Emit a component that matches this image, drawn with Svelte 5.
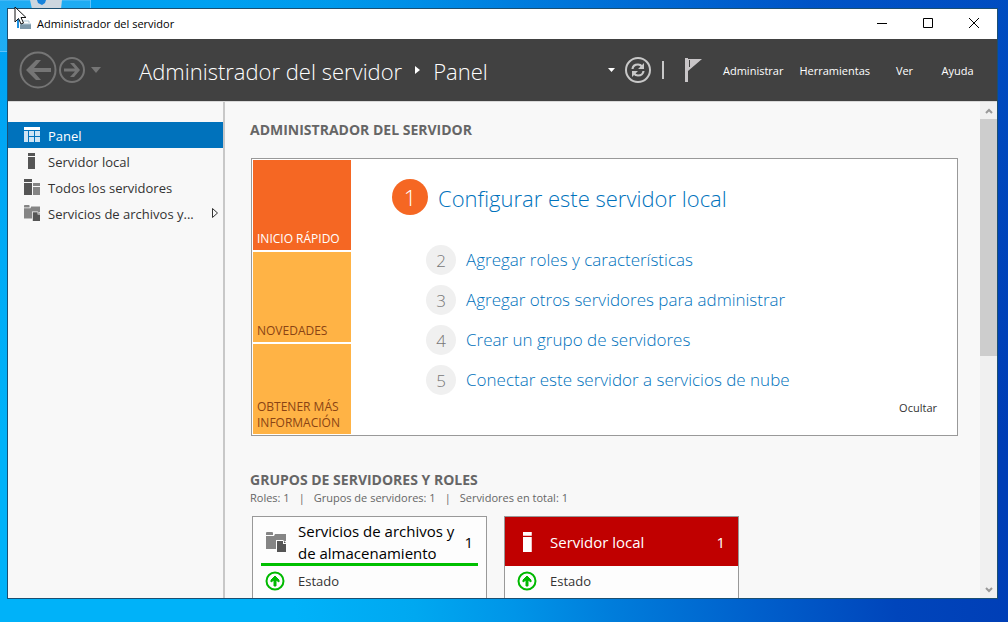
<script>
  const nav = [
    { label: 'Panel', icon: 'panel', active: true },
    { label: 'Servidor local', icon: 'server' },
    { label: 'Todos los servidores', icon: 'servers' },
    { label: 'Servicios de archivos y...', icon: 'files', expandable: true },
  ];
  const menus = ['Administrar', 'Herramientas', 'Ver', 'Ayuda'];
  const steps = [
    'Configurar este servidor local',
    'Agregar roles y características',
    'Agregar otros servidores para administrar',
    'Crear un grupo de servidores',
    'Conectar este servidor a servicios de nube',
  ];
  const totals = ['Roles: 1', 'Grupos de servidores: 1', 'Servidores en total: 1'];
  const groups = [
    { name: 'Servicios de archivos y de almacenamiento', icon: 'files', count: 1, alert: false },
    { name: 'Servidor local', icon: 'server', count: 1, alert: true },
  ];
</script>

{#snippet icon(name)}
  {#if name === 'panel'}
    <svg viewBox="0 0 16 16" aria-hidden="true">
      <path fill="#fff" d="M0 0h16v3H0z" />
      <path fill="#cfe4f4" d="M0 4h4v11H0zM5 4h5v5H5zM11 4h5v5h-5zM5 10h5v5H5zM11 10h5v5h-5z" />
    </svg>
  {:else if name === 'server'}
    <svg viewBox="0 0 16 16" aria-hidden="true">
      <path fill="currentColor" d="M4 0h7v3H4zM4 4h7v12H4z" />
    </svg>
  {:else if name === 'servers'}
    <svg viewBox="0 0 16 16" aria-hidden="true">
      <path fill="#555" d="M0 0h8v3H0zM0 4h8v12H0z" />
      <path fill="#858585" d="M9 4h7v3H9zM9 8h7v8H9z" />
    </svg>
  {:else}
    <svg viewBox="0 0 20 20" aria-hidden="true">
      <path fill="#858585" d="M0 1q0-1 1-1h5q1 0 1 1v2H0zM0 4h8l1-2h11v7h-2l-1-1h-7v9H0z" />
      <path fill="#555" d="M11 9h6v3h3v8h-9zM18 9l2 2h-2z" />
    </svg>
  {/if}
{/snippet}

<div class="desktop">
  <svg class="bin" viewBox="0 0 91 52" aria-hidden="true">
    <path d="M0 0h90.500v51.500H0" fill="#fff" fill-opacity=".12" stroke="#8fd3ff" stroke-opacity=".6" />
    <path d="M30 0h32l-1 9H32z" fill="#ccd6df" />
    <path d="M37 0h9l-1 3-3 2-4-2z" fill="#1683dc" />
  </svg>

  <div class="window">
    <div class="titlebar">
      <svg class="app" viewBox="0 0 16 14" aria-hidden="true">
        <path d="M1 2h2v10H1z" fill="#1a8fe0" />
        <path d="M4 8h11v5H4z" fill="#7c98aa" />
        <path d="M6 7V5h7v2M4 8h11" fill="none" stroke="#a9c3d2" />
      </svg>
      <span class="name">Administrador del servidor</span>
      <button aria-label="Minimizar"><svg viewBox="0 0 12 12"><path d="M1 6.500h10" /></svg></button>
      <button aria-label="Maximizar"><svg viewBox="0 0 12 12"><path d="M1.500 1.500h9v9h-9z" /></svg></button>
      <button aria-label="Cerrar"><svg viewBox="0 0 12 12"><path d="M1 1l10 10M11 1L1 11" /></svg></button>
    </div>

    <header>
      <button class="back" aria-label="Atrás">
        <svg viewBox="0 0 38 38">
          <circle cx="19" cy="19" r="17.500" fill="none" stroke="#757575" stroke-width="2" />
          <path d="M7 19L17 9h5l-7 8h17v4H15l7 8h-5z" fill="#757575" />
        </svg>
      </button>
      <button class="forward" aria-label="Adelante">
        <svg viewBox="0 0 26 26">
          <circle cx="13" cy="13" r="12" fill="none" stroke="#757575" stroke-width="2" />
          <path d="M21 13l-6-7h-4l5 5.500H5v3h11L11 20h4z" fill="#757575" />
        </svg>
      </button>
      <button class="history" aria-label="Historial"><svg viewBox="0 0 10 6"><path d="M0 0h10L5 6z" fill="#757575" /></svg></button>
      <h1>
        <span>Administrador del servidor</span>
        <svg viewBox="0 0 5 8" aria-hidden="true"><path d="M0 0l5 4-5 4z" fill="#fff" /></svg>
        <span>Panel</span>
      </h1>
      <button class="drop" aria-label="Opciones"><svg viewBox="0 0 7 4"><path d="M0 0h7L3.500 4z" fill="#fff" /></svg></button>
      <button class="refresh" aria-label="Actualizar">
        <svg viewBox="0 0 26 26">
          <circle cx="13" cy="13" r="12" fill="none" stroke="#c8c8c8" stroke-width="2" />
          <path d="M7.500 12q.5-4.500 5.500-4.500 2.500 0 4 2M18.500 14q-.5 4.500-5.500 4.500-2.500 0-4-2" fill="none" stroke="#c8c8c8" stroke-width="2.200" />
          <path d="M19 6v6h-6zM7 20v-6h6z" fill="#c8c8c8" />
        </svg>
      </button>
      <span class="bar"></span>
      <button class="flag" aria-label="Notificaciones">
        <svg viewBox="0 0 17 24"><path d="M0 0h3v24H0zM3 1h14L3 13z" fill="#c9c6c8" /><path d="M4.500 2v7" stroke="#414141" /></svg>
      </button>
      <nav class="menus">
        {#each menus as menu}<button>{menu}</button>{/each}
      </nav>
    </header>

    <div class="body">
      <nav class="side">
        {#each nav as item}
          <a href="#{item.icon}" class:active={item.active}>
            <span class="glyph">{@render icon(item.icon)}</span>
            <span class="label">{item.label}</span>
            {#if item.expandable}
              <svg class="expand" viewBox="0 0 8 12" aria-hidden="true"><path d="M1.500 1.500L6.500 6l-5 4.500z" fill="none" stroke="#333" /></svg>
            {/if}
          </a>
        {/each}
      </nav>

      <main>
        <h2>ADMINISTRADOR DEL SERVIDOR</h2>
        <section class="welcome">
          <div class="tabs">
            <button class="current">INICIO RÁPIDO</button>
            <button>NOVEDADES</button>
            <button>OBTENER MÁS INFORMACIÓN</button>
          </div>
          <div class="content">
            <ol>
              {#each steps as step, i}
                <li class:first={i === 0}><span class="num">{i + 1}</span><a href="#paso-{i + 1}">{step}</a></li>
              {/each}
            </ol>
            <button class="hide">Ocultar</button>
          </div>
        </section>

        <h2>GRUPOS DE SERVIDORES Y ROLES</h2>
        <p class="totals">
          {#each totals as total, i}
            {#if i > 0}<span class="sep">|</span>{/if}<span>{total}</span>
          {/each}
        </p>
        <div class="groups">
          {#each groups as group}
            <article>
              <div class="head" class:alert={group.alert}>
                <span class="glyph">{@render icon(group.icon)}</span>
                <h3>{group.name}</h3>
                <span class="count">{group.count}</span>
              </div>
              <a class="state" href="#estado">
                <svg viewBox="0 0 20 20" aria-hidden="true">
                  <circle cx="10" cy="10" r="8.500" fill="none" stroke="#00b900" stroke-width="2" />
                  <path d="M10 5l4 4v2l-3-2v6H9V9l-3 2V9z" fill="#00b900" stroke="#00b900" />
                </svg>
                <span>Estado</span>
              </a>
            </article>
          {/each}
        </div>
      </main>

      <div class="scroll">
        <button aria-label="Subir"><svg viewBox="0 0 8 6"><path d="M1 5l3-3 3 3" /></svg></button>
        <div class="thumb"></div>
        <button aria-label="Bajar"><svg viewBox="0 0 8 6"><path d="M1 1l3 3 3-3" /></svg></button>
      </div>
    </div>
  </div>

  <svg class="cursor" viewBox="0 0 14 20" aria-hidden="true">
    <path d="M1 1v15l3.500-3.500L7 18l2.500-1-2.500-5.500h5z" fill="#fff" stroke="#111" />
  </svg>
</div>

<style>
  :global(body) { margin: 0; }
  * { box-sizing: border-box; }
  svg { display: block; flex: none; }
  button {
    padding: 0;
    border: 0;
    background: none;
    color: inherit;
    font: inherit;
    display: flex;
    align-items: center;
    justify-content: center;
    flex: none;
  }
  a { color: inherit; text-decoration: none; }
  h1, h2, h3, p, ol { margin: 0; padding: 0; font-weight: 400; }

  .desktop {
    position: relative;
    height: 100vh;
    padding: 8px 10px 23px 7px;
    display: flex;
    overflow: hidden;
    background:
      linear-gradient(180deg, rgba(0, 120, 225, 0.3), transparent 70%),
      linear-gradient(82deg, #00b2f9 0%, #00b2f9 27%, #00a8f0 38%, #0095e8 47%, #007ddb 56%, #0060cc 69%, #0045bb 82%, #003ab3 100%);
    font-family: "Open Sans", "Noto Sans", sans-serif;
    color: #333;
  }
  .bin { position: absolute; left: 0; top: 0; width: 91px; height: 52px; }
  .cursor { position: absolute; left: 14px; top: 6px; width: 14px; height: 20px; }

  .window {
    position: relative;
    flex: 1;
    min-width: 0;
    display: flex;
    flex-direction: column;
    border: 1px solid #1b4f72;
    background: #f8f8f8;
  }

  .titlebar {
    display: flex;
    align-items: center;
    height: 30px;
    flex: none;
    padding: 0 0 2px 8px;
    background: #fff;
    color: #000;
    font-size: 11px;
  }
  .titlebar .app { width: 16px; height: 14px; margin-right: 5px; }
  .titlebar .name { flex: 1; }
  .titlebar button { width: 46px; height: 28px; }
  .titlebar button svg { width: 12px; height: 12px; }
  .titlebar button path { fill: none; stroke: #000; }

  header {
    display: flex;
    align-items: center;
    height: 62px;
    flex: none;
    padding: 0 13px 0 11px;
    background: #414141;
    color: #fff;
  }
  .back svg { width: 38px; height: 38px; }
  .forward { margin-left: 2px; }
  .forward svg, .refresh svg { width: 26px; height: 26px; }
  .history { margin-left: 6px; }
  .history svg { width: 10px; height: 6px; }
  h1 {
    flex: 1;
    display: flex;
    align-items: center;
    gap: 13px;
    margin-left: 38px;
    font-size: 22px;
    font-weight: 300;
    line-height: 32px;
    white-space: nowrap;
  }
  h1 span { padding-top: 2px; }
  h1 svg { width: 5px; height: 8px; }
  .drop { margin-right: 10px; }
  .drop svg { width: 7px; height: 4px; }
  .bar { width: 2px; height: 18px; margin: 0 21px 0 11px; background: #c8c8c8; }
  .flag { margin-right: 13px; }
  .flag svg { width: 17px; height: 24px; }
  .menus { display: flex; font-size: 11px; }
  .menus button { min-width: 53px; padding: 0 8px; height: 28px; }

  .body { flex: 1; min-height: 0; display: flex; border-top: 1px solid #d9d9d9; }
  .side {
    width: 217px;
    flex: none;
    padding-top: 20px;
    border-right: 2px solid #c8c8c8;
    font-size: 13px;
  }
  .side a { display: flex; align-items: center; height: 26px; padding: 0 4px 0 16px; }
  .side a.active { background: #0072bc; color: #fff; }
  .side .glyph { color: #555; }
  .side svg { width: 16px; height: 16px; }
  .side .label { flex: 1; margin-left: 8px; padding-top: 2px; white-space: nowrap; }
  .side .expand { width: 8px; height: 12px; }

  main { flex: 1; min-width: 0; overflow: hidden; padding: 18px 22px 0 25px; }
  h2 { font-size: 14px; font-weight: 700; line-height: 20px; color: #666; }
  .welcome {
    display: flex;
    margin: 18px 0 34px 1px;
    padding: 1px;
    border: 1px solid #999;
    background: #fff;
  }
  .tabs { display: flex; flex-direction: column; gap: 2px; width: 98px; flex: none; }
  .tabs button {
    height: 90px;
    padding: 0 4px 3px;
    align-items: flex-end;
    justify-content: flex-start;
    background: #ffb345;
    color: #8a4314;
    font-size: 12px;
    line-height: 16px;
    text-align: left;
  }
  .tabs .current { background: #f56723; color: #fff; }
  .content { flex: 1; display: flex; flex-direction: column; justify-content: space-between; padding: 19px 19px 18px 41px; }
  ol { list-style: none; }
  li { display: flex; align-items: center; gap: 10px; height: 30px; margin: 0 0 10px 34px; font-size: 17px; font-weight: 300; color: #0072bc; white-space: nowrap; }
  li a { padding-bottom: 2px; }
  li.first { height: 36px; margin: 0 0 30px; font-size: 22px; }
  li.first a { padding: 2px 0 0; }
  li:last-child { margin-bottom: 0; }
  .num { display: flex; align-items: center; justify-content: center; width: 30px; height: 30px; border-radius: 50%; background: #f0f0f0; color: #777; }
  .first .num { width: 36px; height: 36px; background: #f56723; color: #fff; }
  .hide { align-self: flex-end; font-size: 11px; line-height: 16px; }

  .totals { display: flex; gap: 9px; font-size: 11px; line-height: 16px; color: #666; }
  .groups { display: flex; gap: 17px; margin: 10px 0 0 2px; }
  article { width: 235px; border: 1px solid #999; background: #fdfdfd; }
  .head {
    display: flex;
    align-items: center;
    height: 49px;
    margin: 0 8px;
    padding-top: 3px;
    border-bottom: 3px solid #00c000;
    color: #000;
    font-size: 15px;
    line-height: 22px;
  }
  .head .glyph { width: 37px; padding-left: 5px; flex: none; }
  .head svg { width: 20px; height: 20px; }
  .head h3 { flex: 1; font-size: inherit; }
  .head .count { padding: 0 5px 0 4px; }
  .head.alert { margin: 0; padding: 0 8px; border: 0; background: #c00000; color: #fff; }
  .state { display: flex; align-items: center; height: 30px; padding-left: 12px; margin-bottom: 60px; font-size: 13px; }
  .state svg { width: 20px; height: 20px; margin-right: 13px; }

  .scroll { width: 17px; flex: none; display: flex; flex-direction: column; background: #f0f0f0; }
  .scroll button { height: 17px; }
  .scroll .thumb { height: 237px; margin-bottom: auto; background: #cdcdcd; }
  .scroll svg { width: 8px; height: 6px; fill: none; stroke: #999; stroke-width: 2; }
</style>
